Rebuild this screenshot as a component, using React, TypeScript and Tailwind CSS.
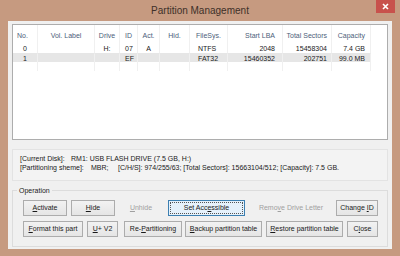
import React from "react";

const cols = [
  { name: "No.", w: "w-[25px]", h: "text-left pl-[4px]", c: "text-left pl-[10px]" },
  { name: "Vol. Label", w: "w-[57px]", h: "text-center", c: "text-center" },
  { name: "Drive", w: "w-[25px]", h: "text-center", c: "text-center" },
  { name: "ID", w: "w-[18px]", h: "text-left pl-[5px]", c: "text-left pl-[5px]" },
  { name: "Act.", w: "w-[22px]", h: "text-center", c: "text-center" },
  { name: "Hid.", w: "w-[30px]", h: "text-center", c: "text-center" },
  { name: "FileSys.", w: "w-[38px]", h: "text-left pl-[6px]", c: "text-left pl-[8px]" },
  { name: "Start LBA", w: "w-[55px]", h: "text-right pr-[7px]", c: "text-right pr-[7px]" },
  { name: "Total Sectors", w: "w-[49px]", h: "text-right pr-[4px]", c: "text-right pr-[4px]" },
  { name: "Capacity", w: "w-[39px]", h: "text-right pr-[5px]", c: "text-right pr-[5px]" },
];

const rows = [
  ["0", "", "H:", "07", "A", "", "NTFS", "2048", "15458304", "7.4 GB"],
  ["1", "", "", "EF", "", "", "FAT32", "15460352", "202751", "99.0 MB"],
  ["", "", "", "", "", "", "", "", "", ""],
];

// label with one underlined (mnemonic) letter
const Mn = ({ text, at }: { text: string; at: number }) => (
  <span>
    {text.slice(0, at)}
    <span className="underline underline-offset-[1px]">{text[at]}</span>
    {text.slice(at + 1)}
  </span>
);

const Btn = ({
  text,
  at,
  w,
  ml,
  disabled,
  focused,
}: {
  text: string;
  at: number;
  w: string;
  ml: string;
  disabled?: boolean;
  focused?: boolean;
}) => {
  if (disabled) {
    return (
      <div className={`${w} ${ml} h-[16px] flex items-center justify-center text-[#a0a0a0] whitespace-nowrap`}>
        <Mn text={text} at={at} />
      </div>
    );
  }
  if (focused) {
    return (
      <div className={`${w} ${ml} h-[16px] border border-[#3c7fb1] bg-[#e5f1fb] p-[1px] flex`}>
        <div className="flex-1 border border-dotted border-[#555] flex items-center justify-center text-[#1a1a1a] whitespace-nowrap">
          <Mn text={text} at={at} />
        </div>
      </div>
    );
  }
  return (
    <div
      className={`${w} ${ml} h-[16px] border border-[#acacac] bg-gradient-to-b from-[#f2f2f2] to-[#e5e5e5] flex items-center justify-center text-[#1a1a1a] whitespace-nowrap`}
    >
      <Mn text={text} at={at} />
    </div>
  );
};

const PartitionList = () => {
  return (
    <div className="w-[376px] h-[116px] border border-[#adadad] bg-white overflow-hidden">
      <div className="flex h-[19px] items-center text-[#4c607a]">
        {cols.map((c) => (
          <div key={c.name} className={`${c.w} ${c.h} h-full leading-[21px] border-r border-[#f0f0f0] whitespace-nowrap`}>
            {c.name}
          </div>
        ))}
      </div>
      {rows.map((r, i) => (
        <div key={i} className="flex h-[9px] text-[#1a1a1a]">
          {cols.map((c, j) => (
            <div
              key={j}
              className={`${c.w} ${c.c} h-full leading-[9px] whitespace-nowrap border-r border-[#f0f0f0] ${
                i === 1 ? "bg-[#e6e6e6] border-t border-t-[#e6e6e6]" : ""
              }`}
            >
              {r[j]}
            </div>
          ))}
        </div>
      ))}
    </div>
  );
};

export default function App() {
  return (
    <div className="w-[400px] h-[256px] bg-[#c69a80] flex flex-col font-['Liberation_Sans',Arial,sans-serif] text-[7px] overflow-hidden">
      {/* title bar */}
      <div className="h-[21px] relative flex items-center justify-center shrink-0">
        <span className="text-[10px] text-[#3d3029] -mt-[1px]">Partition Management</span>
        <div className="absolute right-[5px] top-0 w-[19px] h-[13px] bg-[#c8514c] flex items-center justify-center">
          <svg width="7" height="7" viewBox="0 0 7 7">
            <path d="M1 1 L6 6 M6 1 L1 6" stroke="white" strokeWidth="1.6" />
          </svg>
        </div>
      </div>

      {/* client area */}
      <div className="mx-[8px] mb-[7px] flex-1 bg-[#f0f0f0] flex flex-col pt-[3px] pl-[4px]">
        <PartitionList />

        {/* disk info */}
        <div className="mt-[9px] w-[376px] h-[32px] border border-[#e3e3e3] bg-[#f3f3f3] pl-[7px] pt-[4px] text-[#1a1a1a] leading-[9px]">
          <div className="flex">
            <span className="w-[51px]">[Current Disk]:</span>
            <span>RM1: USB FLASH DRIVE (7.5 GB, H:)</span>
          </div>
          <div className="flex">
            <span className="w-[71px]">[Partitioning sheme]:</span>
            <span className="w-[27px]">MBR;</span>
            <span>[C/H/S]: 974/255/63; [Total Sectors]: 15663104/512; [Capacity]: 7.5 GB.</span>
          </div>
        </div>

        {/* operation group */}
        <div className="mt-[9px] w-[376px] h-[57px] border border-[#dcdcdc] relative pt-[9px]">
          <span className="absolute -top-[5px] left-[4px] bg-[#f0f0f0] px-[2px] text-[#1a1a1a]">Operation</span>
          <div className="flex">
            <Btn text="Activate" at={0} w="w-[44px]" ml="ml-[10px]" />
            <Btn text="Hide" at={0} w="w-[44px]" ml="ml-[4px]" />
            <Btn text="Unhide" at={0} w="w-[44px]" ml="ml-[4px]" disabled />
            <Btn text="Set Accessible" at={7} w="w-[77px]" ml="ml-[5px]" focused />
            <Btn text="Remove Drive Letter" at={4} w="w-[84px]" ml="ml-[4px]" disabled />
            <Btn text="Change ID" at={7} w="w-[42px]" ml="ml-[3px]" />
          </div>
          <div className="flex mt-[5px]">
            <Btn text="Format this part" at={0} w="w-[60px]" ml="ml-[10px]" />
            <Btn text="U+ V2" at={0} w="w-[31px]" ml="ml-[4px]" />
            <Btn text="Re-Partitioning" at={3} w="w-[58px]" ml="ml-[6px]" />
            <Btn text="Backup partition table" at={0} w="w-[77px]" ml="ml-[3px]" />
            <Btn text="Restore partition table" at={0} w="w-[77px]" ml="ml-[4px]" />
            <Btn text="Close" at={1} w="w-[31px]" ml="ml-[4px]" />
          </div>
        </div>
      </div>
    </div>
  );
}
